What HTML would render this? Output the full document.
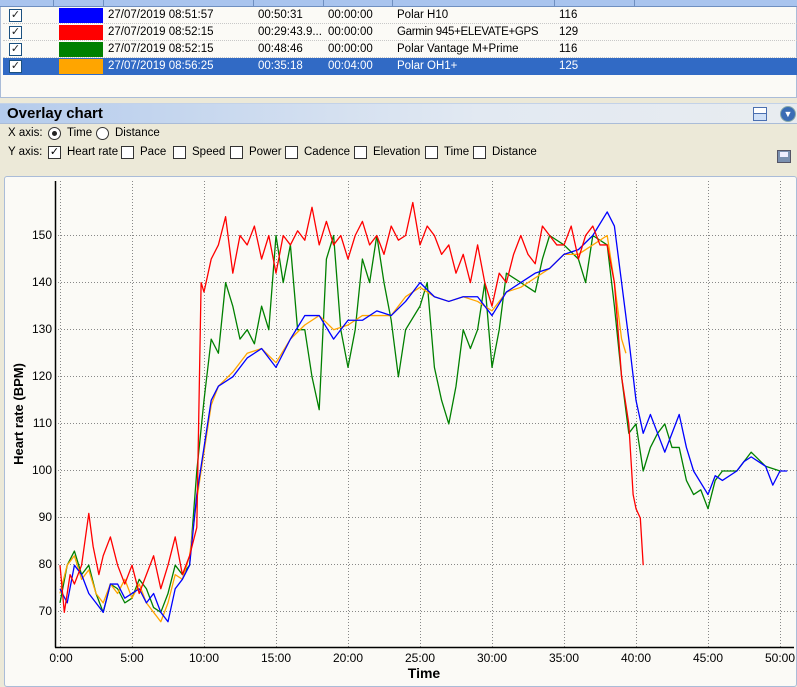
<!DOCTYPE html>
<html><head><meta charset="utf-8"><style>
*{margin:0;padding:0;box-sizing:border-box}
body{width:797px;height:687px;overflow:hidden;background:#ece9d8;font-family:"Liberation Sans",sans-serif;font-size:11.5px;color:#000;position:relative}
.abs{position:absolute}
.row{position:absolute;left:3px;width:794px;height:17px;border-bottom:1px dotted #c8c8c8;white-space:nowrap}
.row span{position:absolute;top:2px}
.cb{position:absolute;left:6px;top:2px;width:13px;height:13px;border:1px solid #1c5180;background:#fff;font-size:11px;line-height:11px;text-align:center;color:#222}
.sw{position:absolute;left:56px;top:1px;width:44px;height:15px}
.bx{position:absolute;top:146px;width:13px;height:13px;border:1px solid #333;background:#fff}
.lb{position:absolute;top:146px}
</style></head><body>
<div class="abs" style="left:0;top:0;width:797px;height:98px;background:#fbfaf6;border:1px solid #aabcd8;border-top:none"></div>
<div class="abs" style="left:0;top:0;width:797px;height:7px;background:#a9c4ee;border-bottom:1px solid #6f8fc0"></div>
<div class="abs" style="left:53px;top:0;width:1px;height:7px;background:#6f8fc0"></div>
<div class="abs" style="left:103px;top:0;width:1px;height:7px;background:#6f8fc0"></div>
<div class="abs" style="left:253px;top:0;width:1px;height:7px;background:#6f8fc0"></div>
<div class="abs" style="left:323px;top:0;width:1px;height:7px;background:#6f8fc0"></div>
<div class="abs" style="left:392px;top:0;width:1px;height:7px;background:#6f8fc0"></div>
<div class="abs" style="left:554px;top:0;width:1px;height:7px;background:#6f8fc0"></div>
<div class="abs" style="left:634px;top:0;width:1px;height:7px;background:#6f8fc0"></div>
<div class="row" style="top:7px"><div class="cb">✓</div><div class="sw" style="background:#0000ff"></div><span style="left:105px">27/07/2019 08:51:57</span><span style="left:255px">00:50:31</span><span style="left:325px">00:00:00</span><span style="left:394px">Polar H10</span><span style="left:556px">116</span></div>
<div class="row" style="top:24px"><div class="cb">✓</div><div class="sw" style="background:#ff0000"></div><span style="left:105px">27/07/2019 08:52:15</span><span style="left:255px">00:29:43.9...</span><span style="left:325px">00:00:00</span><span style="left:394px;letter-spacing:-0.3px">Garmin 945+ELEVATE+GPS</span><span style="left:556px">129</span></div>
<div class="row" style="top:41px"><div class="cb">✓</div><div class="sw" style="background:#008000"></div><span style="left:105px">27/07/2019 08:52:15</span><span style="left:255px">00:48:46</span><span style="left:325px">00:00:00</span><span style="left:394px">Polar Vantage M+Prime</span><span style="left:556px">116</span></div>
<div class="row" style="top:58px;background:#316ac5;color:#fff;border:none"><div class="cb">✓</div><div class="sw" style="background:#ffa500"></div><span style="left:105px">27/07/2019 08:56:25</span><span style="left:255px">00:35:18</span><span style="left:325px">00:04:00</span><span style="left:394px">Polar OH1+</span><span style="left:556px">125</span></div>
<div class="abs" style="left:0;top:103px;width:797px;height:21px;background:linear-gradient(to right,#b4cbec,#e2e9f2 60%,#e8ecf0);border-top:1px solid #c3d2e8;border-bottom:1px solid #aabcd8"></div>
<div class="abs" style="left:7px;top:105px;font-size:15px;font-weight:bold">Overlay chart</div>
<div class="abs" style="left:753px;top:107px;width:14px;height:14px;border:1px solid #4a6fb0;background:linear-gradient(#fff 0 40%,#4a6fb0 40% 50%,#cfe0f7 50%)"></div>
<div class="abs" style="left:780px;top:106px;width:16px;height:16px;border-radius:50%;background:#3a6db5;border:1px solid #8aa;color:#fff;font-size:9px;text-align:center;line-height:14px">▼</div>
<div class="abs" style="left:8px;top:127px">X axis:</div>
<div class="abs" style="left:48px;top:127px;width:13px;height:13px;border-radius:50%;border:1px solid #333;background:#fff"><div style="margin:3px;width:5px;height:5px;border-radius:50%;background:#222"></div></div>
<div class="abs" style="left:67px;top:127px">Time</div>
<div class="abs" style="left:96px;top:127px;width:13px;height:13px;border-radius:50%;border:1px solid #333;background:#fff"></div>
<div class="abs" style="left:115px;top:127px">Distance</div>
<div class="lb" style="left:8px">Y axis:</div>
<div class="bx" style="left:48px;font-size:11px;line-height:11px;text-align:center">✓</div><div class="lb" style="left:67px">Heart rate</div>
<div class="bx" style="left:121px"></div><div class="lb" style="left:140px">Pace</div>
<div class="bx" style="left:173px"></div><div class="lb" style="left:192px">Speed</div>
<div class="bx" style="left:230px"></div><div class="lb" style="left:249px">Power</div>
<div class="bx" style="left:285px"></div><div class="lb" style="left:304px">Cadence</div>
<div class="bx" style="left:354px"></div><div class="lb" style="left:373px">Elevation</div>
<div class="bx" style="left:425px"></div><div class="lb" style="left:444px">Time</div>
<div class="bx" style="left:473px"></div><div class="lb" style="left:492px">Distance</div>
<div class="abs" style="left:777px;top:150px;width:14px;height:13px;background:#7a90b0;border:1px solid #556"><div style="margin:1px 2px;height:5px;background:#eef"></div></div>
<div class="abs" style="left:4px;top:176px;width:793px;height:511px;background:#fbfaf6;border:1px solid #aabcd8;border-radius:3px"></div>
<svg class="abs" style="left:0;top:0" width="797" height="687">
<g stroke="#888" stroke-dasharray="1,2" stroke-width="1">
<line x1="55" x2="797" y1="235.5" y2="235.5"/><line x1="55" x2="797" y1="282.5" y2="282.5"/><line x1="55" x2="797" y1="329.5" y2="329.5"/><line x1="55" x2="797" y1="376.5" y2="376.5"/><line x1="55" x2="797" y1="423.5" y2="423.5"/><line x1="55" x2="797" y1="470.5" y2="470.5"/><line x1="55" x2="797" y1="517.5" y2="517.5"/><line x1="55" x2="797" y1="564.5" y2="564.5"/><line x1="55" x2="797" y1="611.5" y2="611.5"/>
<line y1="181" y2="647" x1="60.5" x2="60.5"/><line y1="181" y2="647" x1="132.5" x2="132.5"/><line y1="181" y2="647" x1="204.5" x2="204.5"/><line y1="181" y2="647" x1="276.5" x2="276.5"/><line y1="181" y2="647" x1="348.5" x2="348.5"/><line y1="181" y2="647" x1="420.5" x2="420.5"/><line y1="181" y2="647" x1="492.5" x2="492.5"/><line y1="181" y2="647" x1="564.5" x2="564.5"/><line y1="181" y2="647" x1="636.5" x2="636.5"/><line y1="181" y2="647" x1="708.5" x2="708.5"/><line y1="181" y2="647" x1="780.5" x2="780.5"/>
</g>
<g transform="translate(60,612.3) scale(14.4,-4.71) translate(0,-70)" fill="none" stroke-width="1.3" stroke-linejoin="round">
<polyline vector-effect="non-scaling-stroke" stroke="#008000" points="0,72 0.5,80 1,83 1.5,78 2,80 2.5,74 3,70 3.5,76 4,75 4.5,72 5,73 5.5,77 6,75 6.5,71 7,70 7.5,74 8,80 8.5,78 9,80 9.5,100 10,115 10.5,128 11,125 11.5,140 12,135 12.5,128 13,130 13.5,127 14,135 14.5,130 15,150 15.5,140 16,148 16.5,130 17,130 17.5,120 18,113 18.5,145 19,150 19.5,130 20,122 20.5,130 21,145 21.5,140 22,150 22.5,140 23,132 23.5,120 24,130 25,135 25.5,140 26,122 26.5,115 27,110 27.5,118 28,130 28.5,126 29,130 29.5,140 30,122 30.5,130 31,142 32,140 33,138 33.5,145 34,150 35,148 36,145 36.5,140 37,150 38,148 38.5,135 39,120 39.5,108 40,110 40.5,100 41,105 41.5,108 42,110 42.5,105 43,105 43.5,98 44,95 44.5,96 45,92 45.5,98 46,100 47,100 48,104 49,101 50,100"/>
<polyline vector-effect="non-scaling-stroke" stroke="#ffa500" points="0,74 0.5,80 1,82 1.5,77 2,79 2.5,74 3,72 3.5,76 4,74 4.5,77 5,73 5.5,76 6,72 6.5,70 7,68 7.5,72 8,78 8.5,77 9,82 9.5,94 10,104 10.5,114 11,118 12,121 13,125 14,126 15,123 16,128 17,131 18,133 19,130 20,131 21,133 22,133 23,133 24,137 25,139 26,137 27,136 28,137 29,136 30,134 31,138 32,139 33,141 34,143 35,146 36,146 37,148 38,150 38.5,140 39,128 39.3,125"/>
<polyline vector-effect="non-scaling-stroke" stroke="#0000ff" points="0,75 0.5,72 1,80 1.5,78 2,74 2.5,72 3,70 3.5,76 4,76 4.5,73 5,74 5.5,75 6,72 6.5,74 7,70 7.5,68 8,75 8.5,77 9,80 9.5,95 10,105 10.5,115 11,118 12,120 13,124 14,126 15,122 16,128 17,133 18,133 19,128 20,132 21,132 22,134 23,133 24,136 25,140 26,137 27,136 28,137 29,137 30,133 31,138 32,140 33,142 34,143 35,146 36,147 37,150 38,155 38.5,152 39,140 39.5,128 40,115 40.5,108 41,112 41.5,108 42,104 43,112 43.5,105 44,100 45,95 45.5,99 46,98 47,100 47.5,102 48,103 49,101 49.5,97 50,100 50.5,100"/>
<polyline vector-effect="non-scaling-stroke" stroke="#ff0000" points="0,80 0.3,70 0.7,78 1,76 1.5,80 2,91 2.3,84 2.7,78 3,82 3.5,86 4,80 4.5,76 5,80 5.5,74 6,78 6.5,82 7,75 7.5,80 8,86 8.5,78 9,82 9.5,88 9.8,140 10,138 10.5,145 11,148 11.5,154 12,142 12.5,150 13,148 13.5,152 14,145 14.5,150 15,142 15.5,150 16,148 16.5,151 17,149 17.5,156 18,148 18.5,153 19,148 19.5,150 20,145 20.5,150 21,153 21.5,148 22,150 22.5,146 23,152 23.5,149 24,150 24.5,157 25,148 25.5,152 26,150 26.5,146 27,148 27.5,142 28,146 28.5,140 29,148 29.5,140 30,135 30.5,142 31,140 31.5,146 32,150 32.5,146 33,144 33.5,152 34,150 34.5,148 35,148 35.5,152 36,145 36.5,150 37,152 37.5,148 38,148 38.5,140 39,120 39.5,110 39.8,95 40,92 40.3,90 40.5,80"/>
</g>
<line x1="55.5" x2="55.5" y1="181" y2="647.5" stroke="#000" stroke-width="1.5"/>
<line x1="55" x2="794" y1="647.5" y2="647.5" stroke="#000" stroke-width="1.5"/>
<g font-family="Liberation Sans" font-size="12" text-anchor="end">
<text x="52" y="239">150</text><text x="52" y="286">140</text><text x="52" y="333">130</text><text x="52" y="380">120</text><text x="52" y="427">110</text><text x="52" y="474">100</text><text x="52" y="521">90</text><text x="52" y="568">80</text><text x="52" y="615">70</text>
</g>
<g font-family="Liberation Sans" font-size="12" text-anchor="middle">
<text x="61" y="662">0:00</text><text x="132" y="662">5:00</text><text x="204" y="662">10:00</text><text x="276" y="662">15:00</text><text x="348" y="662">20:00</text><text x="420" y="662">25:00</text><text x="492" y="662">30:00</text><text x="564" y="662">35:00</text><text x="636" y="662">40:00</text><text x="708" y="662">45:00</text><text x="780" y="662">50:00</text>
</g>
<text x="424" y="678" font-family="Liberation Sans" font-size="14" font-weight="bold" text-anchor="middle">Time</text>
<text transform="translate(23,414) rotate(-90)" font-family="Liberation Sans" font-size="13" font-weight="bold" text-anchor="middle">Heart rate (BPM)</text>
</svg>
</body></html>
